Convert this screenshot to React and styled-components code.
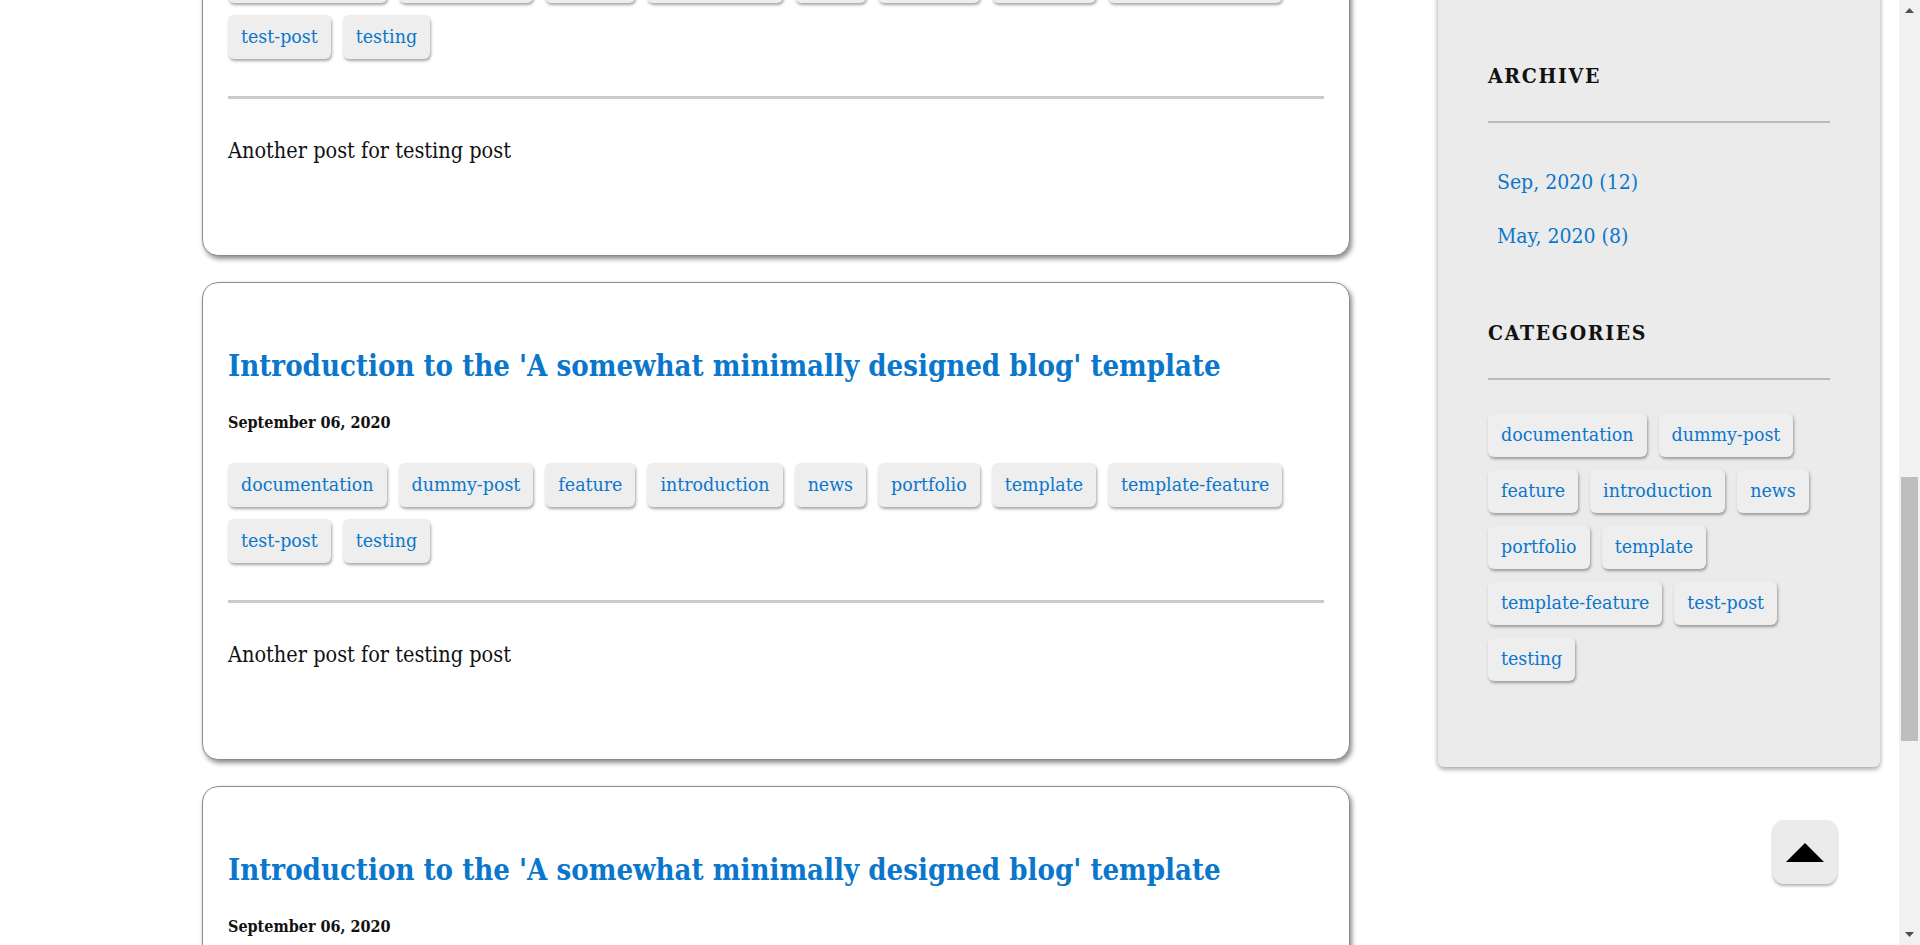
import React from 'react';
import styled, { createGlobalStyle } from 'styled-components';

const FONT = `"DejaVu Serif Condensed", "DejaVu Serif", serif`;
const LINK = '#0a77cc';

const GlobalStyle = createGlobalStyle`
  html, body { margin: 0; height: 100%; }
  body {
    background: #ffffff;
    color: #111111;
    font-family: ${FONT};
    font-stretch: condensed;
  }
`;

/* window: page area + drawn scroll rail */
const Shell = styled.div`
  display: flex;
  height: 100vh;
  overflow: hidden;
`;

const Viewport = styled.div`
  flex: 1;
  min-width: 0;
  overflow: hidden;
`;

const Layout = styled.div`
  display: flex;
  align-items: flex-start;
  gap: 88px;
  padding-left: 202px;
`;

const Feed = styled.main`
  width: 1148px;
  flex-shrink: 0;
  display: flex;
  flex-direction: column;
  gap: 26px;
  margin-top: ${(p) => p.$offset}px;
`;

const Card = styled.article`
  box-sizing: border-box;
  background: #ffffff;
  border: 1px solid #8c8c8c;
  border-radius: 16px;
  box-shadow: 2px 3px 5px rgba(0, 0, 0, 0.45);
  padding: 40px 25px 88px;
`;

const PostTitle = styled.h2`
  margin: 24px 0 0;
  font-size: 29.1px;
  line-height: 38px;
  font-weight: bold;
  a {
    color: ${LINK};
    text-decoration: none;
  }
`;

const PostDate = styled.div`
  margin-top: 26px;
  font-size: 16px;
  line-height: 24px;
  font-weight: bold;
  color: #111;
`;

const TagList = styled.div`
  display: flex;
  flex-wrap: wrap;
  gap: 12px;
  margin-top: ${(p) => p.$top}px;
`;

const Tag = styled.a`
  display: inline-block;
  padding: 8px 13px;
  font-size: 19.4px;
  line-height: 28px;
  color: ${LINK};
  background: #eeeeee;
  border-radius: 6px;
  box-shadow: 1px 2px 3px rgba(0, 0, 0, 0.35);
  text-decoration: none;
`;

const Rule = styled.hr`
  margin: ${(p) => p.$top}px 0 0;
  border: 0;
  height: ${(p) => p.$h}px;
  background: ${(p) => p.$color};
`;

const Excerpt = styled.p`
  margin: 36px 0 0;
  font-size: 21.5px;
  line-height: 32px;
  color: #111;
`;

const Sidebar = styled.aside`
  box-sizing: border-box;
  width: 442px;
  flex-shrink: 0;
  margin-top: ${(p) => p.$offset}px;
  background: #ebebeb;
  border-radius: 6px;
  box-shadow: 0 2px 5px rgba(0, 0, 0, 0.4);
  padding: 90px 50px 86px;
`;

const SectionTitle = styled.h3`
  margin: ${(p) => p.$top}px 0 0;
  font-size: 21px;
  line-height: 24px;
  font-weight: bold;
  letter-spacing: 1.7px;
  color: #111;
`;

const ArchiveList = styled.ul`
  list-style: none;
  margin: 43px 0 0;
  padding: 0 0 0 9px;
  display: flex;
  flex-direction: column;
  gap: 22px;
`;

const ArchiveLink = styled.a`
  display: block;
  font-size: 21px;
  line-height: 32px;
  color: ${LINK};
  text-decoration: none;
`;

const ScrollRail = styled.div`
  width: 21px;
  flex-shrink: 0;
  background: #f1f1f1;
  display: flex;
  flex-direction: column;
`;

const RailButton = styled.div`
  height: 21px;
  display: flex;
  align-items: center;
  justify-content: center;
`;

const RailTrack = styled.div`
  flex: 1;
  padding: 0 2px;
`;

const RailThumb = styled.div`
  height: ${(p) => p.$size}px;
  margin-top: ${(p) => p.$start}px;
  background: #bdbdbd;
`;

const ToTop = styled.button`
  position: fixed;
  right: 83px;
  bottom: 61px;
  width: 64px;
  height: 64px;
  border: 0;
  padding: 0;
  border-radius: 11px;
  background: #ebebeb;
  box-shadow: 0 2px 3px rgba(0, 0, 0, 0.3);
  display: flex;
  align-items: center;
  justify-content: center;
  cursor: pointer;
`;

const TAGS = [
  'documentation',
  'dummy-post',
  'feature',
  'introduction',
  'news',
  'portfolio',
  'template',
  'template-feature',
  'test-post',
  'testing',
];

const POSTS = Array.from({ length: 3 }, (_, i) => ({
  id: i,
  title: "Introduction to the 'A somewhat minimally designed blog' template",
  date: 'September 06, 2020',
  tags: TAGS,
  excerpt: 'Another post for testing post',
}));

const ARCHIVE = ['Sep, 2020 (12)', 'May, 2020 (8)'];

function PostCard({ post }) {
  return (
    <Card>
      <PostTitle>
        <a href="#">{post.title}</a>
      </PostTitle>
      <PostDate>{post.date}</PostDate>
      <TagList $top={28}>
        {post.tags.map((t) => (
          <Tag key={t} href="#">
            {t}
          </Tag>
        ))}
      </TagList>
      <Rule $top={37} $h={3} $color="#cccccc" />
      <Excerpt>{post.excerpt}</Excerpt>
    </Card>
  );
}

function Arrow({ dir }) {
  return (
    <svg width="9" height="5" viewBox="0 0 9 5" aria-hidden="true">
      <polygon points={dir === 'up' ? '4.5,0 9,5 0,5' : '0,0 9,0 4.5,5'} fill="#505050" />
    </svg>
  );
}

export default function App() {
  return (
    <>
      <GlobalStyle />
      <Shell>
        <Viewport>
          <Layout>
            <Feed $offset={-222}>
              {POSTS.map((p) => (
                <PostCard key={p.id} post={p} />
              ))}
            </Feed>
            <Sidebar $offset={-26}>
              <SectionTitle $top={0}>ARCHIVE</SectionTitle>
              <Rule $top={33} $h={2} $color="#bbbbbb" />
              <ArchiveList>
                {ARCHIVE.map((a) => (
                  <li key={a}>
                    <ArchiveLink href="#">{a}</ArchiveLink>
                  </li>
                ))}
              </ArchiveList>
              <SectionTitle $top={69}>CATEGORIES</SectionTitle>
              <Rule $top={33} $h={2} $color="#bbbbbb" />
              <TagList $top={33}>
                {TAGS.map((t) => (
                  <Tag key={t} href="#">
                    {t}
                  </Tag>
                ))}
              </TagList>
            </Sidebar>
          </Layout>
        </Viewport>
        <ScrollRail aria-hidden="true">
          <RailButton>
            <Arrow dir="up" />
          </RailButton>
          <RailTrack>
            <RailThumb $start={456} $size={264} />
          </RailTrack>
          <RailButton>
            <Arrow dir="down" />
          </RailButton>
        </ScrollRail>
      </Shell>
      <ToTop aria-label="Back to top">
        <svg width="38" height="19" viewBox="0 0 38 19" aria-hidden="true">
          <polygon points="19,0 38,19 0,19" fill="#000" />
        </svg>
      </ToTop>
    </>
  );
}
